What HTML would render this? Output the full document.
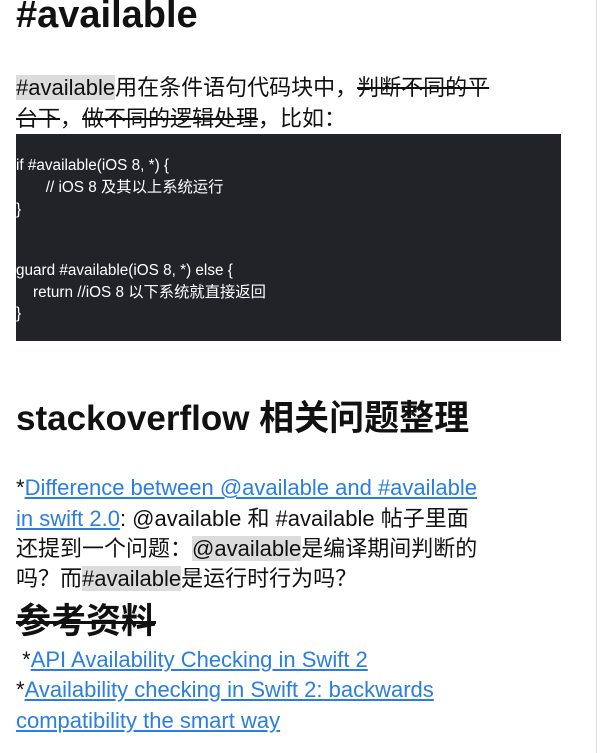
<!DOCTYPE html>
<html><head><meta charset="utf-8"><style>
body{margin:0;width:603px;height:753px;overflow:hidden;background:#fff;font-family:"Liberation Sans","Noto Sans CJK SC",sans-serif;color:#111;position:relative}
.l{position:absolute;left:16px;white-space:nowrap;font-size:22px;line-height:30px}
a{color:#2a7ee0;text-decoration:underline}
.hl{background:#dcdcdc}
s{text-decoration:line-through}
.code{position:absolute;left:16px;top:134px;width:545px;height:207px;background:#212328;color:#fff;font-size:15.3px;line-height:21.5px}
.code div{position:absolute;left:0;white-space:pre}
.edge{position:absolute;left:596px;top:0;width:1px;height:753px;background:#ddd}
</style></head><body>
<div class="l" style="top:-10px;font-size:38px;line-height:50px;font-weight:bold">#available</div>
<div class="l" style="top:73px"><span class="hl">#available</span>用在条件语句代码块中，<s>判断不同的平</s></div>
<div class="l" style="top:104px"><s>台下</s>，<s>做不同的逻辑处理</s>，比如：</div>
<div class="code">
<div style="top:21px">if #available(iOS 8, *) {</div>
<div style="top:43px">       // iOS 8 及其以上系统运行</div>
<div style="top:65px">}</div>
<div style="top:126px">guard #available(iOS 8, *) else {</div>
<div style="top:148px">    return //iOS 8 以下系统就直接返回</div>
<div style="top:169px">}</div>
</div>
<div class="l" style="top:396px;font-size:35px;line-height:46px;font-weight:bold">stackoverflow 相关问题整理</div>
<div class="l" style="top:473px">*<a>Difference between @available and #available</a></div>
<div class="l" style="top:504px"><a>in swift 2.0</a>: @available 和 #available 帖子里面</div>
<div class="l" style="top:534px">还提到一个问题：<span class="hl">@available</span>是编译期间判断的</div>
<div class="l" style="top:564px">吗？而<span class="hl">#available</span>是运行时行为吗？</div>
<div class="l" style="top:601px;font-size:35px;line-height:42px;font-weight:bold"><s>参考资料</s></div>
<div class="l" style="top:645px">&nbsp;*<a>API Availability Checking in Swift 2</a></div>
<div class="l" style="top:675px">*<a>Availability checking in Swift 2: backwards</a></div>
<div class="l" style="top:706px"><a>compatibility the smart way</a></div>
<div class="edge"></div>
</body></html>
